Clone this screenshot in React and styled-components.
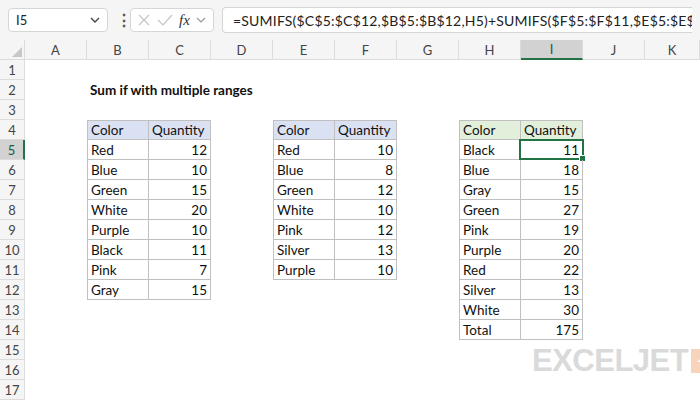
import React from 'react';
import styled, { createGlobalStyle } from 'styled-components';

const Global = createGlobalStyle`
  body { margin: 0; background: #fff; font-family: 'Lato', 'Noto Sans', sans-serif; }
`;

const Page = styled.div`
  width: 700px;
  height: 400px;
  overflow: hidden;
  position: relative;
  background: #fff;
`;

const Bar = styled.div`
  height: 40px;
  display: flex;
  align-items: center;
  padding: 0 8px;
  gap: 8px;
  background: #f5f5f5;
  box-sizing: border-box;
`;

const NameBox = styled.div`
  width: 100px;
  height: 24px;
  background: #fff;
  border: 1px solid #d6d6d6;
  border-radius: 4px;
  display: flex;
  align-items: center;
  justify-content: space-between;
  padding: 0 6px 0 7px;
  box-sizing: border-box;
  font-size: 13px;
  color: #222;
`;

const Dots = styled.div`
  color: #555;
  font-size: 16px;
  font-weight: bold;
  width: 6px;
  text-align: center;
`;

const FxBox = styled.div`
  width: 84px;
  height: 24px;
  background: #fff;
  border: 1px solid #d6d6d6;
  border-radius: 4px;
  display: flex;
  align-items: center;
  gap: 6px;
  padding: 0 6px;
  box-sizing: border-box;
  color: #bbb;
`;

const Fx = styled.span`
  font-family: 'Liberation Serif', serif;
  font-style: italic;
  font-size: 15px;
  color: #333;
`;

const Formula = styled.div`
  flex: 1;
  min-width: 0;
  height: 24px;
  background: #fff;
  border: 1px solid #d6d6d6;
  border-right: none;
  border-radius: 4px 0 0 4px;
  display: flex;
  align-items: center;
  padding-left: 10px;
  font-size: 14px;
  color: #222;
  white-space: nowrap;
  overflow: hidden;
  letter-spacing: 0.2px;
`;

const Sheet = styled.div`
  display: grid;
  grid-template-columns: 25px repeat(10, 62px) 55px;
  grid-auto-rows: 20px;
`;

const Head = styled.div`
  background: ${p => (p.$sel ? '#d2d2d2' : '#f5f5f5')};
  color: ${p => (p.$sel ? '#1e5a35' : '#444')};
  font-size: 13px;
  display: flex;
  align-items: center;
  justify-content: center;
  box-sizing: border-box;
  border-right: 1px solid #dcdcdc;
  border-bottom: ${p => (p.$sel && p.$col ? '2px solid #217346' : '1px solid #dcdcdc')};
  ${p => p.$sel && !p.$col && 'border-right: 2px solid #217346;'}
`;

const Corner = styled(Head)`
  position: relative;
  &::after {
    content: '';
    position: absolute;
    right: 2px;
    bottom: 2px;
    border-left: 10px solid transparent;
    border-bottom: 10px solid #c8c8c8;
  }
`;

const Cell = styled.div`
  position: relative;
  box-sizing: border-box;
  font-size: 13.5px;
  color: #111;
  display: flex;
  align-items: center;
  justify-content: ${p => (p.$right ? 'flex-end' : 'flex-start')};
  padding: 0 3px;
  font-weight: ${p => (p.$bold ? 700 : 400)};
  white-space: nowrap;
  background: ${p => p.$fill || 'transparent'};
  ${p => p.$box && `
    border-right: 1px solid #c0c0c0;
    border-bottom: 1px solid #c0c0c0;
    ${p.$top ? 'border-top: 1px solid #c0c0c0;' : ''}
    ${p.$left ? 'border-left: 1px solid #c0c0c0;' : ''}
  `}
`;

const Selection = styled.div`
  position: absolute;
  inset: -1px -2px -1px -2px;
  border: 2px solid #217346;
  pointer-events: none;
  &::after {
    content: '';
    position: absolute;
    right: -4px;
    bottom: -4px;
    width: 5px;
    height: 5px;
    background: #217346;
    border: 1px solid #fff;
  }
`;

const Logo = styled.div`
  position: absolute;
  left: 532px;
  top: 343px;
  display: flex;
  align-items: center;
  gap: 3px;
  font-family: 'Liberation Sans', sans-serif;
  font-weight: 700;
  font-size: 31px;
  color: #dadada;
  letter-spacing: -0.5px;
`;

const LogoMark = styled.div`
  width: 22px;
  height: 24px;
  background: #f8d4bc;
  display: flex;
  align-items: center;
  justify-content: center;
`;

const t1 = [['Red', 12], ['Blue', 10], ['Green', 15], ['White', 20], ['Purple', 10], ['Black', 11], ['Pink', 7], ['Gray', 15]];
const t2 = [['Red', 10], ['Blue', 8], ['Green', 12], ['White', 10], ['Pink', 12], ['Silver', 13], ['Purple', 10]];
const t3 = [['Black', 11], ['Blue', 18], ['Gray', 15], ['Green', 27], ['Pink', 19], ['Purple', 20], ['Red', 22], ['Silver', 13], ['White', 30], ['Total', 175]];

const cols = ['A', 'B', 'C', 'D', 'E', 'F', 'G', 'H', 'I', 'J', 'K'];

// "row-col" -> cell props
const cells = {};
cells['2-1'] = { text: 'Sum if with multiple ranges', bold: true };
const addTable = (data, c, fill) => {
  cells[`4-${c}`] = { text: 'Color', box: true, top: true, left: true, fill };
  cells[`4-${c + 1}`] = { text: 'Quantity', box: true, top: true, fill };
  data.forEach(([n, q], i) => {
    cells[`${5 + i}-${c}`] = { text: n, box: true, left: true };
    cells[`${5 + i}-${c + 1}`] = { text: q, box: true, right: true };
  });
};
addTable(t1, 1, '#d9e1f2');
addTable(t2, 4, '#d9e1f2');
addTable(t3, 7, '#e2efda');

const rows = Array.from({ length: 17 }, (_, i) => i + 1);

export default function App() {
  return (
    <Page>
      <Global />
      <Bar>
        <NameBox>
          <span>I5</span>
          <svg width="12" height="12" viewBox="0 0 12 12"><path d="M2 4l4 4 4-4" fill="none" stroke="#444" strokeWidth="1.4" /></svg>
        </NameBox>
        <Dots>⋮</Dots>
        <FxBox>
          <svg width="14" height="14" viewBox="0 0 14 14"><path d="M2 2l10 10M12 2L2 12" stroke="#c4c4c4" strokeWidth="1.2" /></svg>
          <svg width="16" height="14" viewBox="0 0 16 14"><path d="M1 7l5 5 9-10" fill="none" stroke="#c4c4c4" strokeWidth="1.2" /></svg>
          <Fx>fx</Fx>
          <svg width="10" height="10" viewBox="0 0 10 10"><path d="M1 3l4 4 4-4" fill="none" stroke="#999" strokeWidth="1.2" /></svg>
        </FxBox>
        <Formula>=SUMIFS($C$5:$C$12,$B$5:$B$12,H5)+SUMIFS($F$5:$F$11,$E$5:$E$11,H5)</Formula>
      </Bar>
      <Sheet>
        <Corner />
        {cols.map(c => <Head key={c} $col $sel={c === 'I'}>{c}</Head>)}
        {rows.map(r => (
          <React.Fragment key={r}>
            <Head $sel={r === 5}>{r}</Head>
            {cols.map((c, ci) => {
              const d = cells[`${r}-${ci}`] || {};
              return (
                <Cell key={c} $box={d.box} $top={d.top} $left={d.left} $fill={d.fill} $right={d.right} $bold={d.bold}>
                  {d.text}
                  {r === 5 && c === 'I' && <Selection />}
                </Cell>
              );
            })}
          </React.Fragment>
        ))}
      </Sheet>
      <Logo>
        EXCELJET
        <LogoMark>
          <svg width="12" height="16" viewBox="0 0 12 16"><path d="M11 1L1 9h5l2 6z" fill="#fff" /></svg>
        </LogoMark>
      </Logo>
    </Page>
  );
}
